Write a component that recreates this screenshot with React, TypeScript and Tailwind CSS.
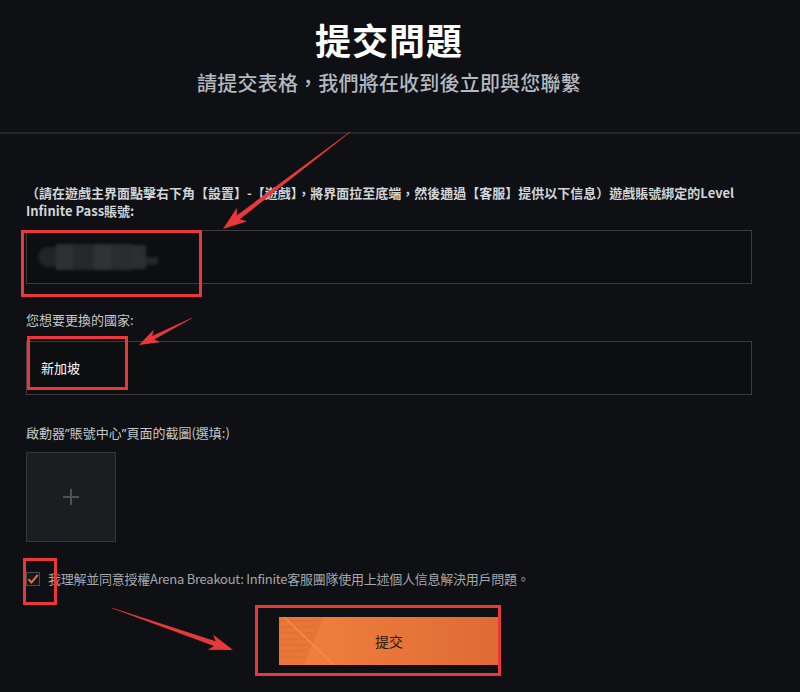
import React from "react";

type Pt = [number, number];

function arrowPoints(tail: Pt, tip: Pt, headLen: number, headW: number, w0: number, w1: number) {
  const dx = tip[0] - tail[0];
  const dy = tip[1] - tail[1];
  const len = Math.hypot(dx, dy);
  const ux = dx / len;
  const uy = dy / len;
  const nx = -uy;
  const ny = ux;
  const bx = tip[0] - ux * headLen;
  const by = tip[1] - uy * headLen;
  const nb = tip[0] - ux * headLen * 0.8;
  const nby = tip[1] - uy * headLen * 0.8;
  const pts: Pt[] = [
    [tail[0] + (nx * w0) / 2, tail[1] + (ny * w0) / 2],
    [nb + (nx * w1) / 2, nby + (ny * w1) / 2],
    [bx + (nx * headW) / 2, by + (ny * headW) / 2],
    tip,
    [bx - (nx * headW) / 2, by - (ny * headW) / 2],
    [nb - (nx * w1) / 2, nby - (ny * w1) / 2],
    [tail[0] - (nx * w0) / 2, tail[1] - (ny * w0) / 2],
  ];
  return pts.map((p) => `${p[0].toFixed(1)},${p[1].toFixed(1)}`).join(" ");
}

export default function App() {
  return (
    <div
      className="relative min-h-[692px] w-[800px] overflow-hidden bg-[#0e1013] text-[#cfd3d6]"
      style={{ fontFamily: '"Noto Sans CJK TC", "Noto Sans", sans-serif' }}
    >
      {/* Header */}
      <header className="h-[134px] border-b-2 border-[#23262a]">
        <div className="ml-[26px] flex w-[726px] flex-col items-center pt-[17px]">
          <h1 className="text-[36px] font-bold leading-[44px] tracking-[1px] text-white">提交問題</h1>
          <p className="mt-[8px] text-[20px] font-medium leading-[28px] tracking-[0.2px] text-[#b3bac0]">
            請提交表格，我們將在收到後立即與您聯繫
          </p>
        </div>
      </header>

      {/* Form */}
      <div className="ml-[26px] w-[726px] pt-[50px]">
        <p className="text-[13px] font-bold leading-[18px] text-[#d2d5d8]">
          （請在遊戲主界面點擊右下角【設置】-【遊戲】，將界面拉至底端，然後通過【客服】提供以下信息）遊戲賬號綁定的Level
          <br />
          Infinite Pass賬號:
        </p>
        <div className="mt-[10px] flex h-[54px] items-center border border-[#3a3c3f] bg-[#0c0e10] pl-[11px]">
          <div className="flex h-[28px] items-center blur-[1.5px]">
            <div className="h-[20px] w-[18px] rounded-l-full bg-[#222426]" />
            <div className="h-[26px] w-[17px] bg-[#2e3032]" />
            <div className="h-[26px] w-[21px] bg-[#26282a]" />
            <div className="h-[26px] w-[17px] bg-[#303234]" />
            <div className="h-[26px] w-[21px] bg-[#2a2c2e]" />
            <div className="h-[24px] w-[14px] bg-[#2c2e30]" />
            <div className="mt-[8px] h-[8px] w-[12px] bg-[#242628]" />
          </div>
        </div>

        <p className="mt-[27px] text-[13px] leading-[18px] text-[#c4c8cb]">您想要更換的國家:</p>
        <div className="mt-[12px] flex h-[54px] items-center border border-[#3a3c3f] bg-[#0c0e10] pl-[14px] text-[13px] text-white">
          新加坡
        </div>

        <p className="mt-[29px] text-[13px] leading-[18px] text-[#c4c8cb]">
          啟動器<span className="font-['Noto_Sans']">”</span>賬號中心<span className="font-['Noto_Sans']">”</span>頁面的截圖(選填:)
        </p>
        <div className="mt-[10px] flex h-[90px] w-[90px] items-center justify-center border border-[#34373a] bg-[#1b1d1f]">
          <svg width="18" height="18" viewBox="0 0 18 18">
            <path d="M9 1v16M1 9h16" stroke="#4e5154" strokeWidth="2" />
          </svg>
        </div>

        <div className="mt-[28px] flex h-[18px] items-center">
          <div className="flex h-[14px] w-[14px] items-center justify-center border border-[#4a4c4f] bg-[#15171a]">
            <svg width="12" height="12" viewBox="0 0 12 12">
              <path d="M1.5 6.2 L4.5 9.5 L10.8 1.8" fill="none" stroke="#e8733a" strokeWidth="2" />
            </svg>
          </div>
          <span className="ml-[8px] text-[13px] leading-[18px] tracking-[-0.25px] text-[#a3a8ac]">
            我理解並同意授權Arena Breakout: Infinite客服團隊使用上述個人信息解決用戶問題。
          </span>
        </div>

        <div className="mt-[29px] flex justify-center">
          <button className="relative h-[48px] w-[220px] overflow-hidden bg-gradient-to-r from-[#f2813e] to-[#df6b34] text-[14px] text-[#2a170c]">
            <svg className="absolute left-0 top-0" width="70" height="48" viewBox="0 0 70 48">
              <polygon points="0,0 45,0 25,48 0,48" fill="#d9662f" opacity="0.35" />
              <path d="M0 4h40M0 10h36M0 16h34M0 22h32M0 28h30M0 34h28M0 40h26" stroke="#c95a28" strokeWidth="1" opacity="0.35" />
              <path d="M5 0 L55 48" stroke="#ff9a5c" strokeWidth="1.5" opacity="0.6" />
            </svg>
            <span className="relative">提交</span>
          </button>
        </div>
      </div>

      {/* Annotation overlays */}
      <div className="pointer-events-none absolute left-[21px] top-[230px] h-[67px] w-[181px] border-[3px] border-[#e8383a]" />
      <div className="pointer-events-none absolute left-[27px] top-[336px] h-[54px] w-[101px] border-[3px] border-[#e8383a]" />
      <div className="pointer-events-none absolute left-[23px] top-[558px] h-[47px] w-[34px] border-[3px] border-[#e8383a]" />
      <div className="pointer-events-none absolute left-[255px] top-[605px] h-[71px] w-[246px] border-[3px] border-[#e8383a]" />
      <svg className="pointer-events-none absolute left-0 top-0" width="800" height="692">
        <polygon points={arrowPoints([350, 132], [223, 229], 24, 17, 0.6, 5)} fill="#e8383a" />
        <polygon points={arrowPoints([192, 318], [139, 345], 20, 14, 0.6, 4)} fill="#e8383a" />
        <polygon points={arrowPoints([112, 608], [233, 650], 24, 16, 0.6, 5)} fill="#e8383a" />
      </svg>
    </div>
  );
}
